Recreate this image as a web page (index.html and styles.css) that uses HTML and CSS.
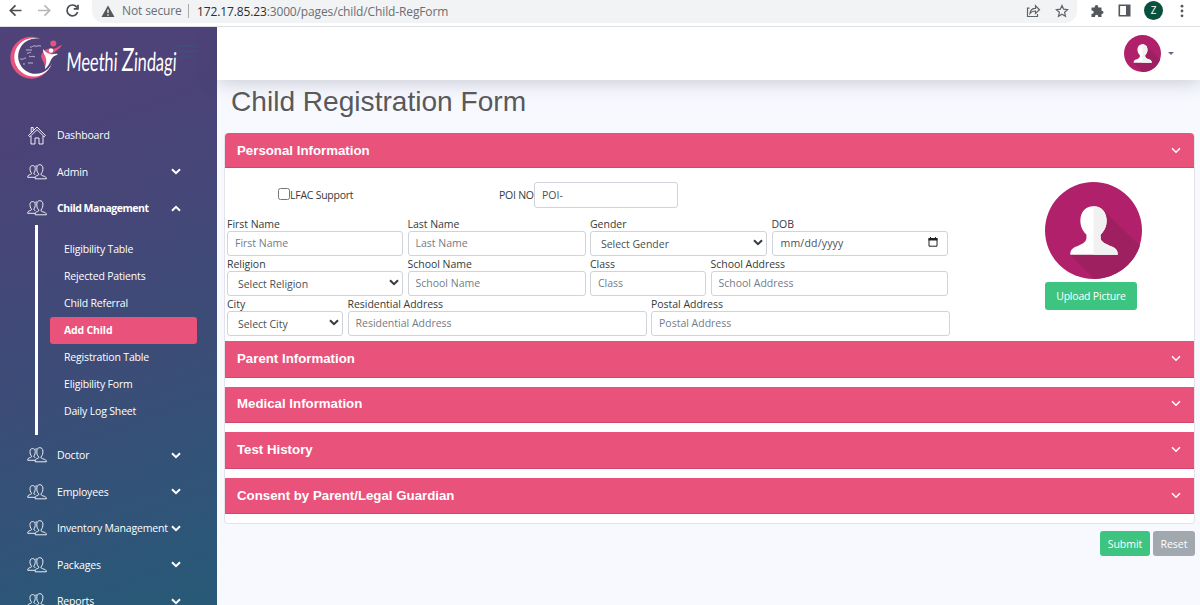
FILE: index.html
```html
<!DOCTYPE html>
<html lang="en">
<head>
    <meta charset="UTF-8">
    <title>Child Registration Form</title>
    <link rel="stylesheet" href="styles.css">
</head>
<body>
    <svg class="defs" width="0" height="0">
        <symbol id="users" viewBox="0 0 20 16">
            <path d="M8.2 14.8c-.2-2 .3-2.600 2-3.100 1.300-.4 1.700-.8 1.500-1.700C10.200 8.400 9.700 6.500 9.800 4c.1-2.100 1.200-3.300 3-3.300s3 1.200 3.100 3.300c.1 2.500-.5 4.400-1.900 6-.2.9.2 1.300 1.500 1.700 2.600.8 3.800 1 3.900 3.100z"/>
            <path d="M8.300 13.300H.7c0-1.900.7-2.100 2.700-2.800 1-.3 1.300-.7 1.100-1.400C3.400 7.800 2.900 6.300 3 4.400c.1-1.900 1-2.800 2.600-2.800 1.700 0 2.500 1 2.600 2.800.1 1.900-.3 3.400-1.400 4.700-.1.700.2 1 1.600 1.500M8.200 2.400c.6-.6 1.300-.6 1.900-.1"/>
        </symbol>
        <symbol id="down" viewBox="0 0 10 7">
            <path d="M1 1.200l4 4 4-4"/>
        </symbol>
        <symbol id="avatar" viewBox="0 0 96 96">
            <circle cx="48" cy="48" r="48" fill="#b0206b"/>
            <path d="M57 27l37 36A48 48 0 0 1 49 96L25 72l25-10z" fill="#9f2060"/>
            <path d="M48 24c-8 0-13 6-13 14 0 6 2 10 6 14v3c0 4-3 6-8 8-6 2-8 4-8 9h47c0-5-2-7-8-9-5-2-9-4-9-8v-3c4-4 6-8 6-14 0-8-5-14-13-14z" fill="#fff"/>
            <path d="M48 24c8 0 13 6 13 14 0 6-2 10-6 14v3c0 4 4 6 9 8 6 2 8 4 8 9H48z" fill="#f1f1f1"/>
        </symbol>
    </svg>

    <div class="browser">
        <svg class="nav-btns" width="84" height="22" viewBox="0 0 84 22">
            <path d="M21.500 10.500H10.500M15.500 5.300l-5.200 5.200 5.200 5.200" stroke="#4a4d51"/>
            <path d="M38 10.500h11M44.500 5.300l5.200 5.200-5.200 5.200" stroke="#b5b7ba"/>
            <path d="M77 7.500a5.400 5.400 0 1 0 .6 4.500M78 4.800v4h-4.300" stroke="#4a4d51"/>
        </svg>
        <div class="address">
            <svg width="14" height="13" viewBox="0 0 14 13"><path d="M7 .5L13.500 12H.5z" fill="#54575b"/><path d="M7 4.500v3.500M7 9.200v1.500" stroke="#f1f3f4" stroke-width="1.400"/></svg>
            <span class="secure">Not secure</span>
            <span class="url"><b>172.17.85.23</b>:3000/pages/child/Child-RegForm</span>
            <svg class="share" width="15" height="14" viewBox="0 0 15 14"><path d="M3.500 4.200H1.500V12.500h10V10M4 9.500c.3-3.500 2.200-5.200 5.500-5.200V1.800l4 4-4 3.700V7C7 7 5.300 7.700 4 9.500z"/></svg>
            <svg class="star" width="14" height="14" viewBox="0 0 14 14"><path d="M7 1.500l1.600 3.700 4 .4-3 2.700.9 4L7 10.200l-3.500 2.100.9-4-3-2.700 4-.4z"/></svg>
        </div>
        <svg class="ext" width="14" height="14" viewBox="0 0 14 14"><path d="M1.500 3.500h3.200v-.6a1.800 1.800 0 0 1 3.600 0v.6h3.200v3.200h.4a1.600 1.600 0 0 1 0 3.200h-.4V13H8.200v-.6a1.600 1.600 0 0 0-3.200 0v.6H1.500V9.800h.6a1.600 1.600 0 0 0 0-3.200h-.6z" fill="#54575b"/></svg>
        <svg class="panel" width="13" height="13" viewBox="0 0 13 13"><path d="M1.300 1.300h10.400v10.400H1.300z" fill="none" stroke="#54575b" stroke-width="1.600"/><path d="M8 1h4v11H8z" fill="#54575b"/></svg>
        <span class="profile">Z</span>
        <svg class="dots" width="4" height="14" viewBox="0 0 4 14"><g fill="#54575b"><circle cx="2" cy="2.200" r="1.400"/><circle cx="2" cy="7" r="1.400"/><circle cx="2" cy="11.800" r="1.400"/></g></svg>
    </div>

    <div class="app">
        <div class="sidebar">
            <div class="brand">
                <svg width="200" height="54" viewBox="0 0 200 54">
                    <path d="M41 12A21 21 0 1 0 51 38 18 18 0 1 1 41 12z" fill="#e8527c"/>
                    <path d="M41 12.400A19.300 19.300 0 1 0 52 36 17.600 17.600 0 1 1 41 12.400z" fill="#fff"/>
                    <circle cx="53.300" cy="16.500" r="3" fill="#e8527c"/>
                    <path d="M62 18c-4 1-6 4-10 4-5-1-9 1-11 7 1 5 4 7 4 12 5-4 3-10 7-14 3-3 7-4 10-9z" fill="#e8527c"/>
                    <circle cx="51" cy="23.500" r="2.200" fill="#fff"/>
                    <path d="M58 27c-4-1-5 1-8 0-4-1-5-3-7-5 0 5 3 7 3 10 1 4-1 7-1 10 5-4 5-9 8-12 2-2 3-1 5-3z" fill="#fff"/>
                    <path d="M30 20c2 1 3-2 5-1s3-1 6 0M26 23h6M27 26c2 1 3-2 4 0M20 32c3 1 4-1 6-1M29 29c2 2 3-1 6 1M23 37h2m3-1h5" fill="none" stroke="#d8d2e6" stroke-width=".8"/>
                    <path d="M177 19h21M175 24.500h23M175 30h20" stroke="#3f507d" stroke-width="1.400"/>
                    <text class="logo-text" transform="translate(66 44) skewX(-3) scale(.58 1)" textLength="190" lengthAdjust="spacingAndGlyphs">Meethi <tspan class="big">Z</tspan>indagi</text>
                </svg>
            </div>
            <div class="menu">
                <div class="item"><svg class="home" viewBox="0 0 20 20"><path d="M1.500 10.500L10 2l8.500 8.500-1.300 1.200L10 4.700l-7.200 7zM4 11v8h4v-6h4v6h4v-8M4.200 7.500v-5h2v3"/></svg><span>Dashboard</span></div>
                <div class="item"><svg class="icon"><use href="#users"/></svg><span>Admin</span><svg class="arrow"><use href="#down"/></svg></div>
                <div class="item open"><svg class="icon"><use href="#users"/></svg><span>Child Management</span><svg class="arrow up"><use href="#down"/></svg></div>
                <div class="submenu">
                    <div>Eligibility Table</div>
                    <div>Rejected Patients</div>
                    <div>Child Referral</div>
                    <div class="active">Add Child</div>
                    <div>Registration Table</div>
                    <div>Eligibility Form</div>
                    <div>Daily Log Sheet</div>
                </div>
                <div class="item"><svg class="icon"><use href="#users"/></svg><span>Doctor</span><svg class="arrow"><use href="#down"/></svg></div>
                <div class="item"><svg class="icon"><use href="#users"/></svg><span>Employees</span><svg class="arrow"><use href="#down"/></svg></div>
                <div class="item"><svg class="icon"><use href="#users"/></svg><span>Inventory Management</span><svg class="arrow"><use href="#down"/></svg></div>
                <div class="item"><svg class="icon"><use href="#users"/></svg><span>Packages</span><svg class="arrow"><use href="#down"/></svg></div>
                <div class="item"><svg class="icon"><use href="#users"/></svg><span>Reports</span><svg class="arrow"><use href="#down"/></svg></div>
            </div>
        </div>

        <div class="main">
            <div class="topbar">
                <svg class="avatar-sm"><use href="#avatar"/></svg>
                <span class="caret"></span>
            </div>
            <h1>Child Registration Form</h1>
            <div class="card">
                <div class="section-head first"><span>Personal Information</span><svg><use href="#down"/></svg></div>
                <div class="personal">
                    <div class="fields">
                        <div class="top-row">
                            <label class="check"><input type="checkbox">LFAC Support</label>
                            <label class="poi">POI NO<input class="control" type="text" value="POI-"></label>
                        </div>
                        <div class="row row-1">
                            <label>First Name<input class="control" placeholder="First Name"></label>
                            <label>Last Name<input class="control" placeholder="Last Name"></label>
                            <label>Gender<span class="control select">Select Gender<svg><use href="#down"/></svg></span></label>
                            <label>DOB<span class="control date">mm/dd/yyyy<svg viewBox="0 0 10 10"><path d="M1 1.600h8v7.600H1z" fill="none" stroke="#222" stroke-width="1"/><path d="M.5 1h9v2.500h-9zM2 0h1v2H2zM7 0h1v2H7z" fill="#222"/></svg></span></label>
                        </div>
                        <div class="row row-2">
                            <label>Religion<span class="control select">Select Religion<svg><use href="#down"/></svg></span></label>
                            <label>School Name<input class="control" placeholder="School Name"></label>
                            <label>Class<input class="control" placeholder="Class"></label>
                            <label>School Address<input class="control" placeholder="School Address"></label>
                        </div>
                        <div class="row row-3">
                            <label>City<span class="control select">Select City<svg><use href="#down"/></svg></span></label>
                            <label>Residential Address<input class="control" placeholder="Residential Address"></label>
                            <label>Postal Address<input class="control" placeholder="Postal Address"></label>
                        </div>
                    </div>
                    <div class="picture">
                        <svg><use href="#avatar"/></svg>
                        <button class="btn upload">Upload Picture</button>
                    </div>
                </div>
                <div class="section-head"><span>Parent Information</span><svg><use href="#down"/></svg></div>
                <div class="section-head"><span>Medical Information</span><svg><use href="#down"/></svg></div>
                <div class="section-head"><span>Test History</span><svg><use href="#down"/></svg></div>
                <div class="section-head"><span>Consent by Parent/Legal Guardian</span><svg><use href="#down"/></svg></div>
            </div>
            <div class="actions">
                <button class="btn submit">Submit</button>
                <button class="btn reset">Reset</button>
            </div>
        </div>
    </div>
</body>
</html>
```
FILE: styles.css
```css
* {
    box-sizing: border-box;
}
body {
    margin: 0;
    height: 605px;
    overflow: hidden;
    font-family: "Open Sans", "Noto Sans", sans-serif;
    font-size: 10.5px;
    color: #343a40;
    background-color: #f8f9ff;
}
svg {
    display: block;
    flex: none;
}
.defs {
    position: absolute;
}

/* browser bar */
.browser {
    height: 27px;
    display: flex;
    align-items: flex-start;
    background-color: #fff;
    border-bottom: 1px solid #dddfe2;
}
.nav-btns {
    fill: none;
    stroke-width: 1.7;
}
.address {
    display: flex;
    align-items: center;
    width: 985px;
    height: 23px;
    margin-left: 8px;
    padding: 0 8px 1px 9px;
    background-color: #f1f3f4;
    border-radius: 0 0 12px 12px;
    font-size: 12px;
    color: #6b6e72;
}
.secure {
    margin-left: 7px;
    padding-right: 7px;
    border-right: 1px solid #a9abae;
    line-height: 14px;
    width: 67px;
    white-space: nowrap;
    letter-spacing: -0.12px;
}
.url {
    margin-left: 8px;
    letter-spacing: -0.13px;
}
.url b {
    font-weight: normal;
    color: #2b2d30;
}
.share {
    margin-left: auto;
}
.share, .star {
    fill: none;
    stroke: #5f6368;
    stroke-width: 1.2;
}
.star {
    margin-left: 14px;
}
.ext {
    margin: 4px 0 0 13px;
}
.panel {
    margin: 4px 0 0 14px;
}
.profile {
    width: 19px;
    height: 19px;
    margin: 1px 0 0 13px;
    border-radius: 50%;
    background-color: #09513f;
    color: #fff;
    font-size: 10px;
    line-height: 19px;
    text-align: center;
}
.dots {
    margin: 4px 0 0 17px;
}

.app {
    display: flex;
    height: 578px;
    overflow: hidden;
}

/* sidebar */
.sidebar {
    width: 217px;
    flex: none;
    color: #fff;
    letter-spacing: -0.17px;
    background: linear-gradient(160deg, #50427a 0%, #4b4377 20%, #3b4d77 60%, #275a77 100%);
}
.brand {
    height: 90px;
}
.logo-text {
    font-family: "Lato", sans-serif;
    font-size: 26px;
    letter-spacing: 0;
    fill: #fff;
}
.logo-text .big {
    font-size: 32px;
}
.item {
    display: flex;
    align-items: center;
    height: 36.6px;
    padding-left: 27px;
}
.item span {
    width: 114px;
    margin-left: 10px;
    white-space: nowrap;
}
.icon, .home {
    width: 20px;
    height: 16px;
    fill: none;
    stroke: #fff;
    stroke-width: 0.9;
}
.home {
    height: 20px;
}
.arrow {
    width: 10px;
    height: 7px;
    fill: none;
    stroke: #fff;
    stroke-width: 2;
}
.up {
    transform: rotate(180deg);
}
.open {
    font-weight: bold;
    letter-spacing: -0.46px;
}
.submenu {
    height: 210px;
    margin: -2px 20px 2px 35px;
    padding: 11px 0 0 12px;
    border-left: 3px solid #fff;
}
.submenu div {
    height: 27.1px;
    padding-left: 14px;
    line-height: 26px;
}
.submenu .active {
    border-radius: 3px;
    background-color: #e9527b;
    font-weight: bold;
}

/* content */
.main {
    flex: 1;
}
.topbar {
    display: flex;
    align-items: center;
    justify-content: flex-end;
    height: 53px;
    padding-right: 26px;
    background-color: #fff;
    box-shadow: 0 2px 20px rgba(60, 65, 85, 0.27);
}
.avatar-sm {
    width: 37px;
    height: 37px;
}
.caret {
    margin-left: 7px;
    border: 3.5px solid transparent;
    border-top-color: #666b85;
    border-bottom: 0;
}
h1 {
    margin: 5px 0 0 14px;
    height: 48px;
    font: 28.1px/34px "Liberation Sans", Arial, sans-serif;
    color: #58595b;
}
.card {
    width: 971px;
    height: 391px;
    margin-left: 7px;
    background-color: #fff;
    border: 1px solid #e2e4ea;
    border-top: 0;
    border-radius: 4px;
}
.section-head {
    display: flex;
    align-items: center;
    justify-content: space-between;
    height: 36.5px;
    margin-bottom: 9.1px;
    padding: 0 13px 1px 12px;
    background-color: #e9527b;
    border-bottom: 1px solid #cf4870;
    color: #fff;
    font: bold 13.28px "Liberation Sans", Arial, sans-serif;
}
.section-head.first {
    height: 35px;
    margin-bottom: 0;
    padding-bottom: 0;
    border-radius: 4px 4px 0 0;
}
.section-head svg {
    width: 10px;
    height: 7px;
    fill: none;
    stroke: #fff;
    stroke-width: 1.5;
}
.personal {
    display: flex;
    justify-content: space-between;
    height: 173px;
    padding: 14px 52px 0 2px;
}
.fields {
    letter-spacing: -0.03px;
}
.top-row {
    display: flex;
    height: 35px;
}
.check {
    display: flex;
    align-items: center;
    width: 221px;
    height: 26px;
    margin-left: 51px;
    letter-spacing: -0.25px;
}
.check input {
    width: 12px;
    height: 12px;
    margin: 0 0 2px;
}
.poi {
    display: flex;
    align-items: center;
    width: 179px;
    height: 26px;
    white-space: nowrap;
    letter-spacing: -0.25px;
}
.row {
    display: grid;
    height: 40px;
    column-gap: 4.5px;
}
.row-1 {
    grid-template-columns: 176px 178px 177px 176.5px;
}
.row-2 {
    grid-template-columns: 176px 178px 116px 237.5px;
}
.row-3 {
    grid-template-columns: 116px 299px 299px;
}
.row label {
    line-height: 14px;
}
.control {
    display: flex;
    align-items: center;
    width: 100%;
    height: 24.5px;
    padding: 0 7px;
    border: 1px solid #ced4da;
    border-radius: 3px;
    background-color: #fff;
    font: inherit;
    color: #495057;
}
.poi .control {
    flex: none;
    width: 144px;
    height: 26px;
    margin-left: auto;
}
.control::placeholder {
    color: #747c84;
}
.select {
    justify-content: space-between;
    padding: 2px 3px 0 10px;
}
.select svg {
    width: 10px;
    height: 7px;
    margin-bottom: 3px;
    fill: none;
    stroke: #343a40;
    stroke-width: 2;
}
.date {
    justify-content: space-between;
    padding: 0 9px 0 8px;
    letter-spacing: 0.2px;
}
.date svg {
    width: 10px;
    height: 10px;
    margin-bottom: 2px;
}
.picture svg {
    width: 97px;
    height: 97px;
}
.btn {
    border: none;
    border-radius: 3px;
    color: #fff;
    font: inherit;
    cursor: pointer;
}
.upload {
    display: block;
    width: 92px;
    height: 28px;
    margin-top: 3px;
    padding: 0;
    background-color: #3cc480;
    letter-spacing: -0.2px;
}
.actions {
    display: flex;
    justify-content: flex-end;
    gap: 3px;
    padding: 7px 5px 0 0;
}
.submit {
    width: 50px;
    height: 25px;
    padding: 0;
    background-color: #3cc480;
}
.reset {
    width: 42px;
    height: 25px;
    padding: 0;
    background-color: #a1a8ae;
}
```
